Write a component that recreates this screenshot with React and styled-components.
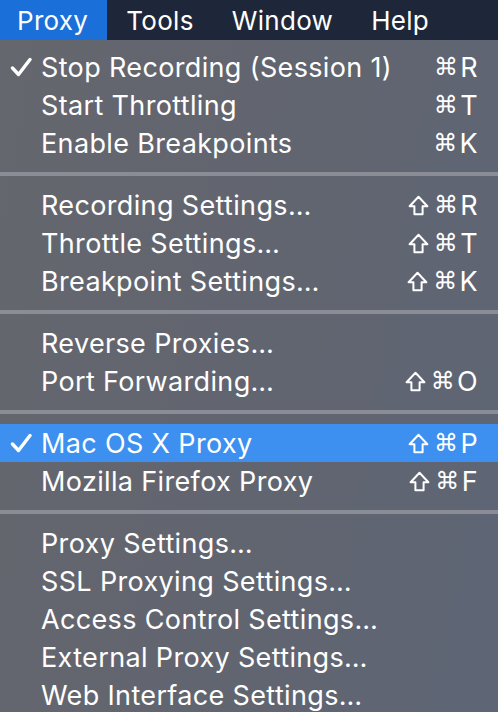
import React from 'react';
import styled, { createGlobalStyle } from 'styled-components';

const GlobalStyle = createGlobalStyle`
  html, body {
    margin: 0;
    padding: 0;
    background: #62656f;
  }
  body {
    font-family: Inter, "Noto Sans", "DejaVu Sans", sans-serif;
    -webkit-font-smoothing: antialiased;
  }
`;

const Screen = styled.div`
  width: 498px;
  height: 712px;
  overflow: hidden;
  display: flex;
  flex-direction: column;
  background: linear-gradient(100deg, #65676e 0%, #62656f 45%, #5e6575 100%);
`;

const MenuBar = styled.div`
  height: 40px;
  flex: none;
  display: flex;
  align-items: stretch;
  background: #1e2739;
  color: #fff;
  font-size: 26px;
  letter-spacing: 0.3px;
`;

const BarItem = styled.div`
  display: flex;
  align-items: center;
  padding-left: ${(p) => (p.$first ? '17px' : '19px')};
  padding-right: 19px;
  background: ${(p) => (p.$active ? '#1a70d8' : 'transparent')};
`;

const Menu = styled.div`
  padding-top: 8px;
  display: flex;
  flex-direction: column;
`;

const Row = styled.div`
  height: 38px;
  display: flex;
  align-items: center;
  color: #fff;
  font-size: 27px;
  letter-spacing: 0.35px;
  padding-right: 20px;
  background: ${(p) => (p.$selected ? '#3d8ff0' : 'transparent')};
`;

const CheckCell = styled.span`
  width: 41px;
  flex: none;
  display: flex;
  align-items: center;
  padding-left: 10px;
  box-sizing: border-box;
`;

const Label = styled.span`
  flex: 1;
  white-space: nowrap;
`;

const Keys = styled.span`
  display: flex;
  align-items: center;
`;

const Command = styled.span`
  font-family: "DejaVu Sans", sans-serif;
  font-size: 24px;
  margin: 0 2px 0 5px;
`;

const Separator = styled.div`
  height: 24px;
  display: flex;
  align-items: center;
  &::after {
    content: '';
    display: block;
    width: 100%;
    height: 4px;
    background: #8a8d95;
  }
`;

const groups = [
  [
    { label: 'Stop Recording (Session 1)', key: 'R', checked: true },
    { label: 'Start Throttling', key: 'T' },
    { label: 'Enable Breakpoints', key: 'K' },
  ],
  [
    { label: 'Recording Settings…', key: 'R', shift: true },
    { label: 'Throttle Settings…', key: 'T', shift: true },
    { label: 'Breakpoint Settings…', key: 'K', shift: true },
  ],
  [
    { label: 'Reverse Proxies…' },
    { label: 'Port Forwarding…', key: 'O', shift: true },
  ],
  [
    { label: 'Mac OS X Proxy', key: 'P', shift: true, checked: true, selected: true },
    { label: 'Mozilla Firefox Proxy', key: 'F', shift: true },
  ],
  [
    { label: 'Proxy Settings…' },
    { label: 'SSL Proxying Settings…' },
    { label: 'Access Control Settings…' },
    { label: 'External Proxy Settings…' },
    { label: 'Web Interface Settings…' },
  ],
];

function CheckIcon() {
  return (
    <svg width="22" height="20" viewBox="0 0 22 20" aria-hidden="true">
      <path
        d="M2.5 11 L8.5 17.5 L20 2.5"
        fill="none"
        stroke="#fff"
        strokeWidth="3.4"
        strokeLinecap="round"
        strokeLinejoin="round"
      />
    </svg>
  );
}

function ShiftIcon() {
  return (
    <svg width="21" height="21" viewBox="0 0 21 21" aria-label="Shift">
      <path
        d="M10.5 1.8 L19.4 11.2 L14.6 11.2 L14.6 19.2 L6.4 19.2 L6.4 11.2 L1.6 11.2 Z"
        fill="none"
        stroke="#fff"
        strokeWidth="2"
        strokeLinejoin="round"
      />
    </svg>
  );
}

function Shortcut({ item }) {
  if (!item.key) return null;
  return (
    <Keys>
      {item.shift && <ShiftIcon />}
      <Command>⌘</Command>
      <span>{item.key}</span>
    </Keys>
  );
}

export default function App() {
  return (
    <Screen>
      <GlobalStyle />
      <MenuBar>
        <BarItem $active $first>Proxy</BarItem>
        <BarItem>Tools</BarItem>
        <BarItem>Window</BarItem>
        <BarItem>Help</BarItem>
      </MenuBar>
      <Menu>
        {groups.map((items, gi) => (
          <React.Fragment key={gi}>
            {gi > 0 && <Separator />}
            {items.map((item) => (
              <Row key={item.label} $selected={item.selected}>
                <CheckCell>{item.checked && <CheckIcon />}</CheckCell>
                <Label>{item.label}</Label>
                <Shortcut item={item} />
              </Row>
            ))}
          </React.Fragment>
        ))}
      </Menu>
    </Screen>
  );
}
